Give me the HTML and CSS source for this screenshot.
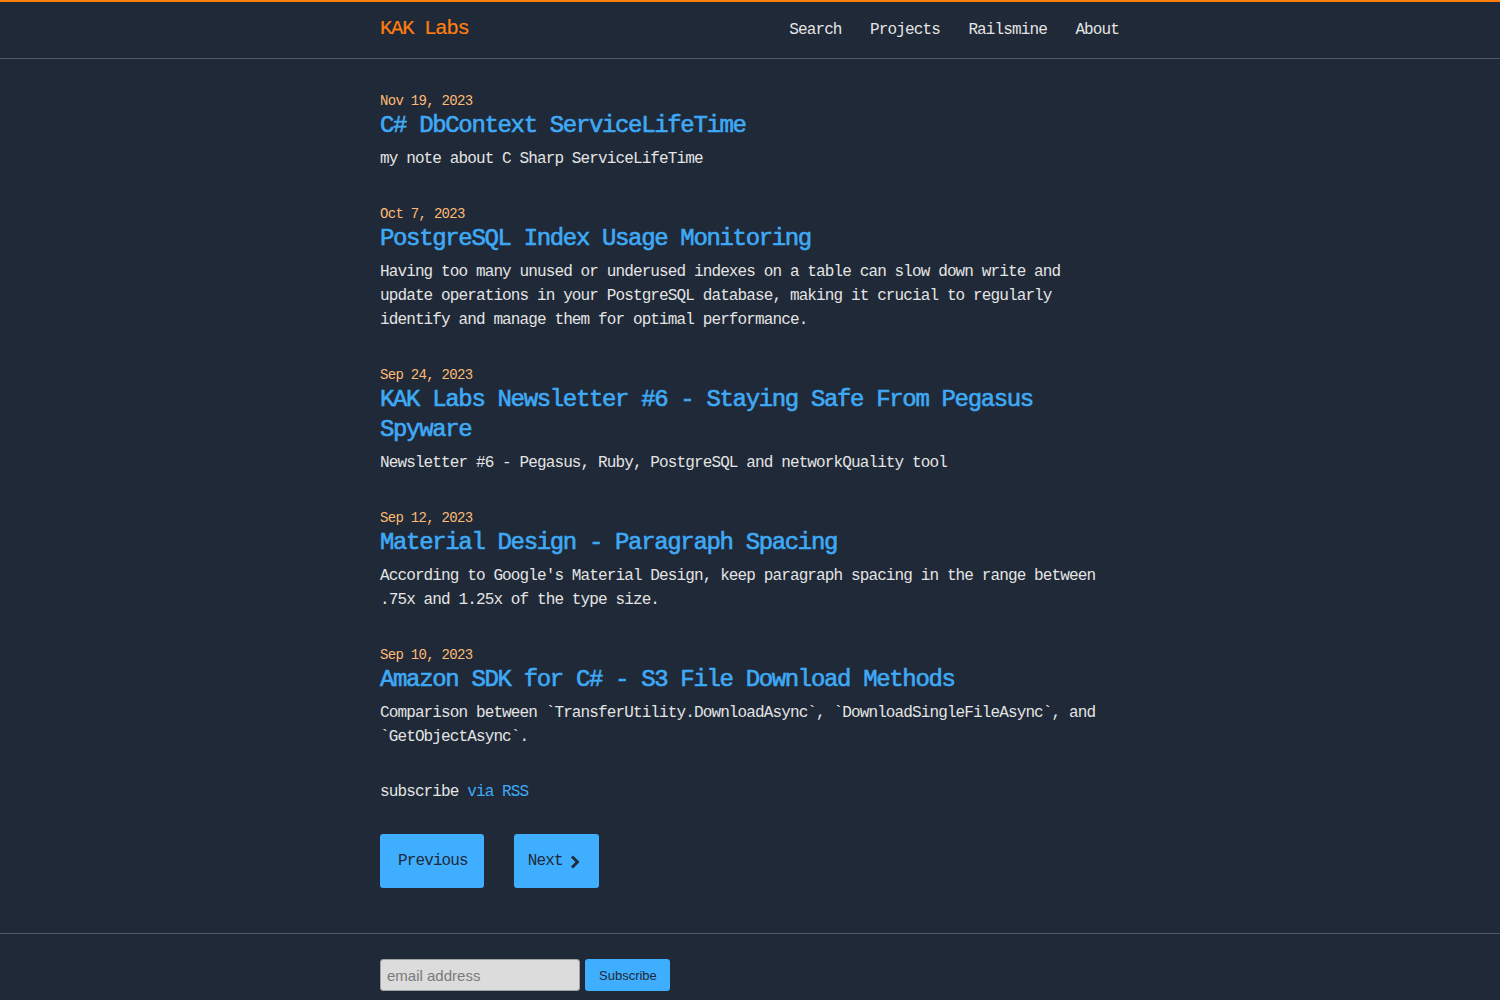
FILE: index.html
```html
<!DOCTYPE html>
<html lang="en">
<head>
<meta charset="utf-8">
<title>KAK Labs</title>
<link rel="stylesheet" href="styles.css">
</head>
<body>
<header class="site-header">
  <div class="wrap header-inner">
    <a class="brand" href="#">KAK Labs</a>
    <nav class="nav">
      <a href="#">Search</a>
      <a href="#">Projects</a>
      <a href="#">Railsmine</a>
      <a href="#">About</a>
    </nav>
  </div>
</header>
<main class="wrap main">
  <ul class="posts">
    <li class="post">
      <span class="date">Nov 19, 2023</span>
      <h3 class="title"><a href="#">C# DbContext ServiceLifeTime</a></h3>
      <p class="excerpt">my note about C Sharp ServiceLifeTime</p>
    </li>
    <li class="post">
      <span class="date">Oct 7, 2023</span>
      <h3 class="title"><a href="#">PostgreSQL Index Usage Monitoring</a></h3>
      <p class="excerpt">Having too many unused or underused indexes on a table can slow down write and update operations in your PostgreSQL database, making it crucial to regularly identify and manage them for optimal performance.</p>
    </li>
    <li class="post">
      <span class="date">Sep 24, 2023</span>
      <h3 class="title"><a href="#">KAK Labs Newsletter #6 - Staying Safe From Pegasus Spyware</a></h3>
      <p class="excerpt">Newsletter #6 - Pegasus, Ruby, PostgreSQL and networkQuality tool</p>
    </li>
    <li class="post">
      <span class="date">Sep 12, 2023</span>
      <h3 class="title"><a href="#">Material Design - Paragraph Spacing</a></h3>
      <p class="excerpt">According to Google's Material Design, keep paragraph spacing in the range between .75x and 1.25x of the type size.</p>
    </li>
    <li class="post">
      <span class="date">Sep 10, 2023</span>
      <h3 class="title"><a href="#">Amazon SDK for C# - S3 File Download Methods</a></h3>
      <p class="excerpt">Comparison between `TransferUtility.DownloadAsync`, `DownloadSingleFileAsync`, and `GetObjectAsync`.</p>
    </li>
  </ul>
  <p class="rss">subscribe <a href="#">via RSS</a></p>
  <div class="pager">
    <a class="btn btn-prev" href="#">Previous</a>
    <a class="btn btn-next" href="#">Next <svg class="chev" width="10" height="16" viewBox="0 0 10 16"><path d="M2 2.5 L7.5 8 L2 13.5" fill="none" stroke="currentColor" stroke-width="2.8"/></svg></a>
  </div>
</main>
<footer class="site-footer">
  <form class="wrap sub-form">
    <input class="email" type="email" placeholder="email address">
    <button class="sub-btn" type="button">Subscribe</button>
  </form>
</footer>
</body>
</html>
```
FILE: styles.css
```css
* { box-sizing: border-box; }
html, body { margin: 0; padding: 0; }
body {
  background: #1f2937;
  color: #e4e4e4;
  font-family: "Liberation Mono", "DejaVu Sans Mono", monospace;
  font-size: 16px;
  line-height: 24px;
  letter-spacing: -0.055em;
  border-top: 2px solid #ff7f0e;
}
a { text-decoration: none; }
.wrap { width: 740px; margin: 0 auto; }
.site-header { border-bottom: 1px solid #4b5a6e; }
.header-inner {
  height: 56px;
  display: flex;
  align-items: center;
  justify-content: space-between;
}
.brand { color: #ff7f0e; font-size: 20.5px; line-height: 30px; margin-top: -3px; letter-spacing: -0.06em; -webkit-text-stroke: 0.2px #ff7f0e; }
.nav { display: flex; gap: 28.5px; margin-right: 1px; }
.nav a { color: #e4e4e4; font-size: 16px; letter-spacing: -0.055em; }
.main { padding-top: 32px; }
.posts { list-style: none; margin: 0; padding: 0; }
.post { margin-bottom: 33px; }
.date { display: block; color: #fdba74; font-size: 14px; line-height: 20px; letter-spacing: -0.05em; }
.title { margin: 0; font-size: 24px; line-height: 30px; font-weight: normal; letter-spacing: -0.056em; }
.title a { color: #3fa9f5; -webkit-text-stroke: 0.6px #3fa9f5; }
.excerpt { margin: 6px 0 0; }
.rss { margin: -2px 0 0; }
.rss a { color: #3fa9f5; }
.pager { display: flex; gap: 30px; margin-top: 30px; padding-bottom: 45px; }
.btn {
  display: flex;
  align-items: center;
  height: 54px;
  background: #40aeff;
  color: #1f2937;
  border-radius: 3px;
}
.btn-prev { padding: 0 16px 0 18px; }
.btn-next { padding: 0 19px 0 14px; gap: 7px; }
.chev { display: block; margin-top: 1px; }
.site-footer { border-top: 1px solid #4b5a6e; padding-top: 25px; }
.sub-form { display: flex; gap: 5px; letter-spacing: 0; }
.email {
  width: 200px;
  height: 32px;
  background: #dcdcdc;
  border: 1px solid #a0a0a0;
  border-radius: 3px;
  padding: 0 6px;
  font-family: "Liberation Sans", Arial, sans-serif;
  font-size: 15px;
  color: #333;
}
.email::placeholder { color: #7a7a7a; }
.sub-btn {
  height: 32px;
  padding: 0 13px 0 14px;
  background: #40aeff;
  border: none;
  border-radius: 3px;
  font-family: "Liberation Sans", Arial, sans-serif;
  font-size: 13px;
  color: #1f2937;
}
```
